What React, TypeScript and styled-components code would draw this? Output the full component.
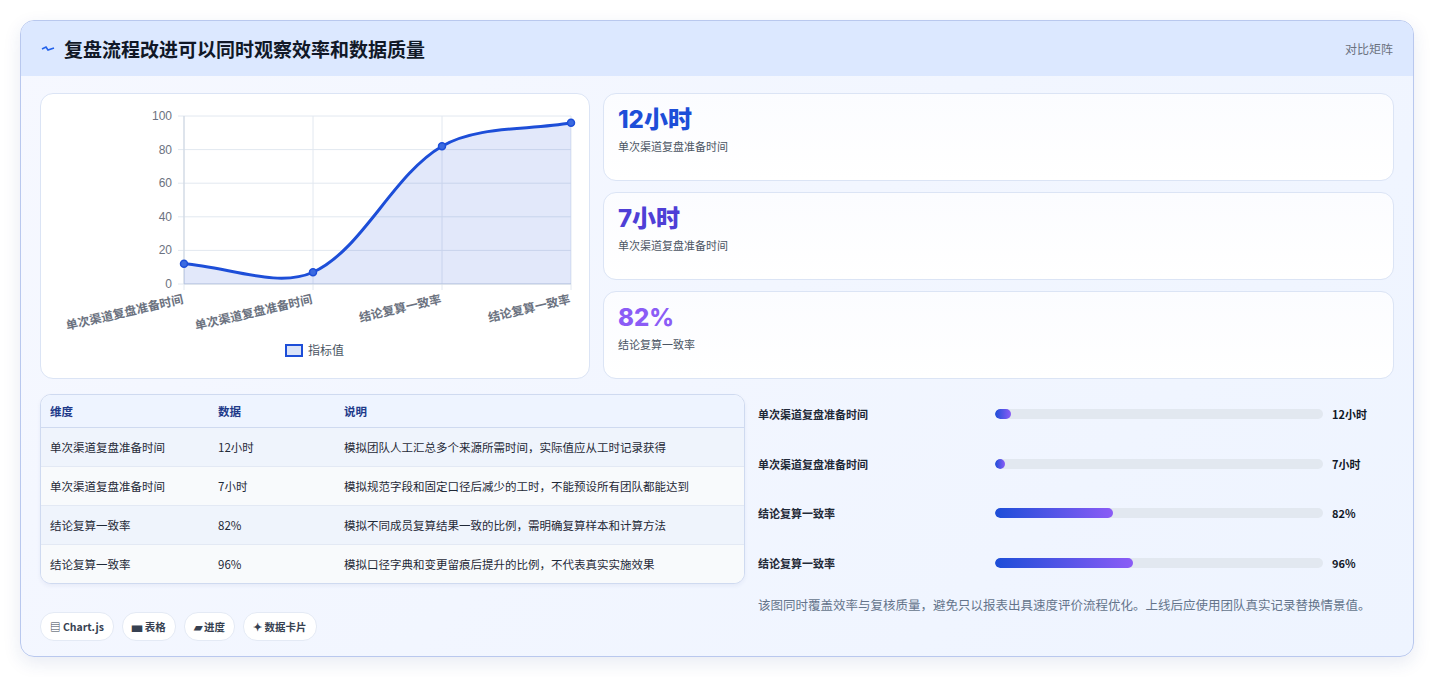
import React from "react";
import styled, { createGlobalStyle } from "styled-components";

const GlobalStyle = createGlobalStyle`
  body {
    margin: 0;
    background: #ffffff;
    font-family: "Noto Sans CJK SC", "Noto Sans", sans-serif;
  }
`;

const Page = styled.div`
  padding: 20px 20px 20px 20px;
`;

const Panel = styled.section`
  width: 1394px;
  height: 637px;
  box-sizing: border-box;
  border: 1px solid #b9c8ee;
  border-radius: 14px;
  background: linear-gradient(135deg, #f6f8ff 0%, #eef4ff 100%);
  box-shadow: 0 6px 18px rgba(30, 58, 138, 0.1);
  overflow: hidden;
`;

const Header = styled.header`
  height: 55px;
  background: #dce8ff;
  display: flex;
  align-items: center;
  justify-content: space-between;
  padding: 0 20px 0 20px;
`;

const Title = styled.h1`
  margin: 0;
  font-size: 19px;
  font-weight: 700;
  color: #111827;
  display: flex;
  align-items: center;
  gap: 9px;
`;

const Tag = styled.span`
  font-size: 12px;
  color: #6b7280;
`;

const Body = styled.div`
  padding: 17px 19px 0 19px;
  display: flex;
  flex-direction: column;
  gap: 15px;
`;

const TopRow = styled.div`
  display: grid;
  grid-template-columns: 550px 1fr;
  gap: 13px;
`;

const Card = styled.div`
  background: #ffffff;
  border: 1px solid #dbe4f5;
  border-radius: 13px;
`;

const ChartCard = styled(Card)`
  height: 286px;
  box-sizing: border-box;
`;

const Stats = styled.div`
  display: flex;
  flex-direction: column;
  gap: 11px;
`;

const StatCard = styled(Card)`
  height: 88px;
  box-sizing: border-box;
  padding: 9px 14px;
  background: linear-gradient(180deg, #fbfcff, #ffffff);
`;

const StatValue = styled.div<{ $color: string }>`
  font-size: 24px;
  font-weight: 800;
  line-height: 34px;
  color: ${(p) => p.$color};
  font-family: "Inter", "Noto Sans CJK SC", sans-serif;
`;

const StatLabel = styled.div`
  font-size: 11px;
  color: #4b5563;
  margin-top: 1px;
`;

const BottomRow = styled.div`
  display: grid;
  grid-template-columns: 705px 1fr;
  gap: 13px;
`;

const LeftCol = styled.div`
  display: flex;
  flex-direction: column;
  gap: 28px;
`;

const Table = styled.table`
  width: 100%;
  border-collapse: separate;
  border-spacing: 0;
  border: 1px solid #cfdaf0;
  border-radius: 11px;
  overflow: hidden;
  background: #fff;
  font-size: 11.5px;
  box-shadow: 0 2px 4px rgba(30, 58, 138, 0.06);
`;

const Th = styled.th`
  text-align: left;
  font-weight: 700;
  color: #1e3a8a;
  background: #eef4ff;
  height: 32px;
  padding: 0 9px;
  border-bottom: 1px solid #cfdaf0;
`;

const Tr = styled.tr<{ $alt: boolean }>`
  background: ${(p) => (p.$alt ? "#f8fafc" : "#eff4fc")};
`;

const Td = styled.td`
  height: 38px;
  padding: 0 9px;
  color: #1f2937;
  border-bottom: 1px solid #e3e9f4;
  tr:last-child & {
    border-bottom: none;
  }
`;

const Chips = styled.div`
  display: flex;
  gap: 8px;
`;

const Chip = styled.span`
  height: 27px;
  padding: 0 9px;
  display: inline-flex;
  align-items: center;
  gap: 4px;
  background: #fff;
  border: 1px solid #e4eaf5;
  border-radius: 14px;
  font-size: 10.5px;
  font-weight: 700;
  color: #374151;
`;

const RightCol = styled.div`
  display: flex;
  flex-direction: column;
  gap: 9.5px;
`;

const BarRow = styled.div`
  height: 40px;
  display: grid;
  grid-template-columns: 228px 328px 1fr;
  align-items: center;
  column-gap: 9px;
  font-size: 11px;
  font-weight: 600;
  color: #1f2937;
`;

const Track = styled.div`
  height: 10px;
  border-radius: 5px;
  background: #e2e8f0;
  overflow: hidden;
`;

const Fill = styled.div`
  height: 100%;
  border-radius: 5px;
  background: linear-gradient(90deg, #1d4ed8, #8b5cf6);
`;

const BarValue = styled.span`
  font-weight: 700;
  color: #111827;
`;

const Note = styled.p`
  margin: 3px 0 0 0;
  font-size: 12.5px;
  color: #64748b;
`;

const pts = [12, 7, 82, 96].map((v, i) => ({ x: 143 + i * 129, y: 190 - v * 1.68 }));

function splinePath() {
  const t = 0.33;
  const cps = pts.map((p, i) => {
    const prev = pts[i - 1] || p;
    const next = pts[i + 1] || p;
    const d01 = Math.hypot(p.x - prev.x, p.y - prev.y);
    const d12 = Math.hypot(next.x - p.x, next.y - p.y);
    const s = d01 + d12 || 1;
    const fa = (t * d01) / s;
    const fb = (t * d12) / s;
    return {
      p: { x: p.x - fa * (next.x - prev.x), y: p.y - fa * (next.y - prev.y) },
      n: { x: p.x + fb * (next.x - prev.x), y: p.y + fb * (next.y - prev.y) },
    };
  });
  let d = `M${pts[0].x},${pts[0].y}`;
  for (let i = 1; i < pts.length; i++) {
    d += ` C${cps[i - 1].n.x},${cps[i - 1].n.y} ${cps[i].p.x},${cps[i].p.y} ${pts[i].x},${pts[i].y}`;
  }
  return d;
}

const xLabels = ["单次渠道复盘准备时间", "单次渠道复盘准备时间", "结论复算一致率", "结论复算一致率"];

const LineChart = () => {
  const line = splinePath();
  return (
    <svg width="549" height="284" style={{ display: "block" }}>
      {[0, 20, 40, 60, 80, 100].map((v) => {
        const y = 190 - v * 1.68;
        return (
          <g key={v}>
            <line x1={137} x2={530} y1={y} y2={y} stroke="#e2e8f0" />
            <text x={131} y={y + 4} textAnchor="end" fontSize="12" fill="#6b7280" fontFamily="Liberation Sans, sans-serif">
              {v}
            </text>
          </g>
        );
      })}
      {pts.map((p, i) => (
        <line key={i} x1={p.x} x2={p.x} y1={22} y2={196} stroke="#e2e8f0" />
      ))}
      <line x1={143} x2={143} y1={22} y2={190} stroke="#cbd5e1" />
      <line x1={143} x2={530} y1={190} y2={190} stroke="#cbd5e1" />
      <path d={`${line} L530,190 L143,190 Z`} fill="rgba(29,78,216,0.13)" />
      <path d={line} fill="none" stroke="#1d4ed8" strokeWidth="3" />
      {pts.map((p, i) => (
        <circle key={i} cx={p.x} cy={p.y} r="3.5" fill="#3b6ae0" stroke="#1d4ed8" strokeWidth="1.5" />
      ))}
      {xLabels.map((l, i) => (
        <text
          key={i}
          x={pts[i].x}
          y={209}
          textAnchor="end"
          fontSize="12"
          fontWeight="600"
          fill="#6b7280"
          transform={`rotate(-13 ${pts[i].x} 209)`}
        >
          {l}
        </text>
      ))}
      <rect x={245} y={251} width={16} height={11} fill="#dbe4f8" stroke="#1d4ed8" strokeWidth="2" />
      <text x={267} y={261} fontSize="12" fill="#4b5563">指标值</text>
    </svg>
  );
};

const stats = [
  { v: "12小时", l: "单次渠道复盘准备时间", c: "#1d4ed8" },
  { v: "7小时", l: "单次渠道复盘准备时间", c: "#4f3fd6" },
  { v: "82%", l: "结论复算一致率", c: "#8b5cf6" },
];

const rows = [
  ["单次渠道复盘准备时间", "12小时", "模拟团队人工汇总多个来源所需时间，实际值应从工时记录获得"],
  ["单次渠道复盘准备时间", "7小时", "模拟规范字段和固定口径后减少的工时，不能预设所有团队都能达到"],
  ["结论复算一致率", "82%", "模拟不同成员复算结果一致的比例，需明确复算样本和计算方法"],
  ["结论复算一致率", "96%", "模拟口径字典和变更留痕后提升的比例，不代表真实实施效果"],
];

const bars = [
  { l: "单次渠道复盘准备时间", v: "12小时", w: 5 },
  { l: "单次渠道复盘准备时间", v: "7小时", w: 3 },
  { l: "结论复算一致率", v: "82%", w: 36 },
  { l: "结论复算一致率", v: "96%", w: 42 },
];

const App = () => (
  <>
    <GlobalStyle />
    <Page>
      <Panel>
        <Header>
          <Title>
            <svg width="14" height="10" viewBox="0 0 14 10">
              <path d="M1 5 L5 3 L7 6 L13 4" stroke="#2563eb" strokeWidth="1.6" fill="none" />
            </svg>
            复盘流程改进可以同时观察效率和数据质量
          </Title>
          <Tag>对比矩阵</Tag>
        </Header>
        <Body>
          <TopRow>
            <ChartCard>
              <LineChart />
            </ChartCard>
            <Stats>
              {stats.map((s, i) => (
                <StatCard key={i}>
                  <StatValue $color={s.c}>{s.v}</StatValue>
                  <StatLabel>{s.l}</StatLabel>
                </StatCard>
              ))}
            </Stats>
          </TopRow>
          <BottomRow>
            <LeftCol>
              <Table>
                <thead>
                  <tr>
                    <Th style={{ width: 150 }}>维度</Th>
                    <Th style={{ width: 108 }}>数据</Th>
                    <Th>说明</Th>
                  </tr>
                </thead>
                <tbody>
                  {rows.map((r, i) => (
                    <Tr key={i} $alt={i % 2 === 1}>
                      {r.map((c, j) => (
                        <Td key={j}>{c}</Td>
                      ))}
                    </Tr>
                  ))}
                </tbody>
              </Table>
              <Chips>
                <Chip>▤ Chart.js</Chip>
                <Chip>▅ 表格</Chip>
                <Chip>▰ 进度</Chip>
                <Chip>✦ 数据卡片</Chip>
              </Chips>
            </LeftCol>
            <RightCol>
              {bars.map((b, i) => (
                <BarRow key={i}>
                  <span>{b.l}</span>
                  <Track>
                    <Fill style={{ width: `${b.w}%` }} />
                  </Track>
                  <BarValue>{b.v}</BarValue>
                </BarRow>
              ))}
              <Note>该图同时覆盖效率与复核质量，避免只以报表出具速度评价流程优化。上线后应使用团队真实记录替换情景值。</Note>
            </RightCol>
          </BottomRow>
        </Body>
      </Panel>
    </Page>
  </>
);

export default App;
